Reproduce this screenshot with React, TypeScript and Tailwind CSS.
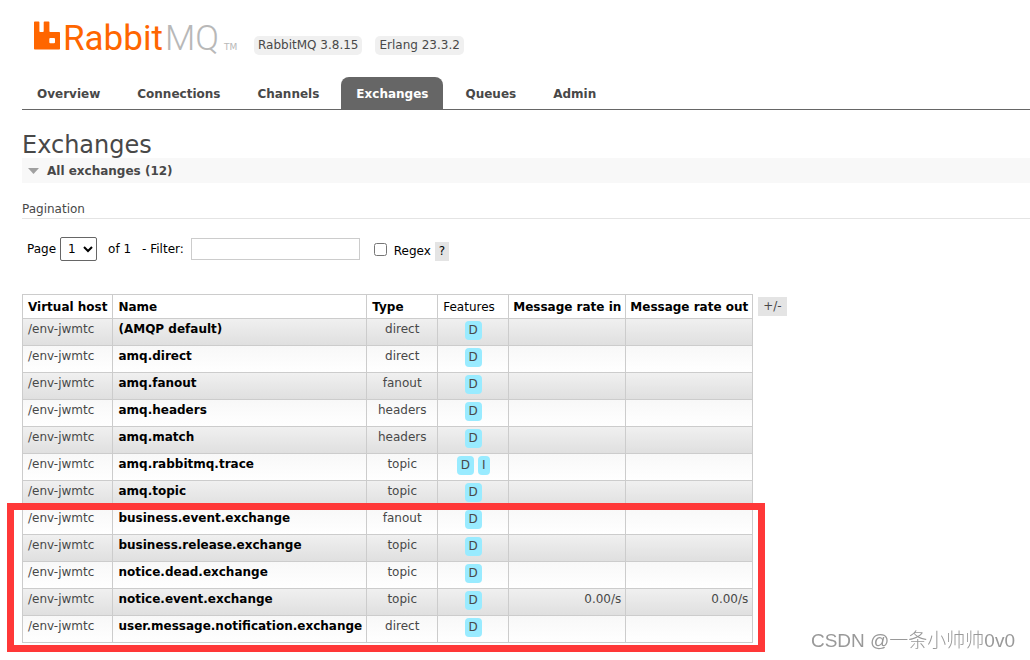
import { useState } from 'react'
import type { ReactNode } from 'react'
import { clsx } from 'clsx'

interface Exchange {
  name: string
  type: string
  features: string[]
  rateIn?: string
  rateOut?: string
}

const VHOST = '/env-jwmtc'

const TABS = ['Overview', 'Connections', 'Channels', 'Exchanges', 'Queues', 'Admin']

const EXCHANGES: Exchange[] = [
  { name: '(AMQP default)', type: 'direct', features: ['D'] },
  { name: 'amq.direct', type: 'direct', features: ['D'] },
  { name: 'amq.fanout', type: 'fanout', features: ['D'] },
  { name: 'amq.headers', type: 'headers', features: ['D'] },
  { name: 'amq.match', type: 'headers', features: ['D'] },
  { name: 'amq.rabbitmq.trace', type: 'topic', features: ['D', 'I'] },
  { name: 'amq.topic', type: 'topic', features: ['D'] },
  { name: 'business.event.exchange', type: 'fanout', features: ['D'] },
  { name: 'business.release.exchange', type: 'topic', features: ['D'] },
  { name: 'notice.dead.exchange', type: 'topic', features: ['D'] },
  { name: 'notice.event.exchange', type: 'topic', features: ['D'], rateIn: '0.00/s', rateOut: '0.00/s' },
  { name: 'user.message.notification.exchange', type: 'direct', features: ['D'] },
]

/** Product logo: the rabbit mark followed by the two-tone word mark. */
const Logo = () => (
  <a href="#" aria-label="RabbitMQ">
    <svg width="208" height="42" viewBox="0 0 208 42">
      <path
        d="M.8 5.500h3.800q.8 0 .8.8v8.900q0 .8.8.8h2.700q.8 0 .8-.8V6.300q0-.8.8-.8h4.100q.8 0 .8.8v8.900q0 .8.8.8h9q.8 0 .8.8v15.900q0 .8-.8.8H.8q-.8 0-.8-.8V6.300q0-.8.8-.8zM16.300 22q-1 0-1 1v3.300q0 1 1 1H20q1 0 1-1V23q0-1-1-1z"
        fill="#ff6600"
        fillRule="evenodd"
      />
      <text y="34" fontSize="35" fontFamily="Roboto, sans-serif">
        <tspan x="29" fill="#ff6600">Rabbit</tspan>
        <tspan x="131" fill="#b8b8b8" fontWeight="300">MQ</tspan>
      </text>
      <text x="190" y="34" fontSize="9" fill="#b8b8b8" fontFamily="'DejaVu Sans', sans-serif">TM</text>
    </svg>
  </a>
)

const VersionTag = ({ children }: { children: ReactNode }) => (
  <span className="rounded-[5px] bg-[#f0f0f0] px-1 leading-[19px]">{children}</span>
)

const FeatureTag = ({ children }: { children: ReactNode }) => (
  <abbr className="inline-block rounded-[4px] bg-[#99ebff] px-1 leading-[19px] no-underline">{children}</abbr>
)

const TH = 'h-6 border border-[#ccc] text-left leading-4 text-black'
const TD = 'h-[27px] border border-[#ccc] pt-[2px] align-top leading-4'

export default function App() {
  const [filter, setFilter] = useState('')
  const [regex, setRegex] = useState(false)

  return (
    <div className="overflow-hidden bg-white pb-[17px] pl-[22px] font-['DejaVu_Sans',Verdana,sans-serif] text-[12px] text-[#484848]">
      <header>
        <div className="flex items-end gap-3 pt-4 pl-3">
          <Logo />
          <div className="mb-[3px] flex gap-[13px]">
            <VersionTag>RabbitMQ 3.8.15</VersionTag>
            <VersionTag>Erlang 23.3.2</VersionTag>
          </div>
        </div>
        <nav className="mt-[19px] flex gap-[7px] border-b border-[#666]">
          {TABS.map(tab => (
            <a
              key={tab}
              href="#"
              className={clsx(
                'rounded-t-lg px-[15px] pt-[2px] leading-[30px] font-bold',
                tab === 'Exchanges' && 'bg-[#666] text-white',
              )}
            >
              {tab}
            </a>
          ))}
        </nav>
      </header>

      <main>
        <h1 className="mt-[22px] text-[24px] leading-[26px]">Exchanges</h1>
        <h2 className="bg-[#f8f8f8] pt-px leading-6 font-bold">
          <button type="button" className="flex items-center gap-2 pl-[6px]">
            <svg width="11" height="6" viewBox="0 0 11 6">
              <path d="M0 0h11L5.500 6z" fill="#a0a0a0" />
            </svg>
            All exchanges (12)
          </button>
        </h2>

        <h3 className="mt-[17px] border-b border-[#e4e4e4] leading-[18px]">Pagination</h3>

        <div className="mt-[18px] flex h-6 items-center pl-[5px] text-black">
          <label htmlFor="page">Page</label>
          <select id="page" className="ml-1 h-6 w-[37px] rounded-[2px] border border-[#666] bg-white pl-[3px]">
            <option>1</option>
          </select>
          <span className="ml-[11px]">of 1</span>
          <label htmlFor="filter" className="ml-[11px]">- Filter:</label>
          <input
            id="filter"
            type="text"
            value={filter}
            onChange={e => setFilter(e.target.value)}
            className="ml-[7px] h-[22px] w-[169px] border border-[#ccc] px-1"
          />
          <input
            id="regex"
            type="checkbox"
            checked={regex}
            onChange={e => setRegex(e.target.checked)}
            className="ml-[14px] size-[13px]"
          />
          <label htmlFor="regex" className="ml-[7px] pt-1">Regex</label>
          <button type="button" className="mt-1 ml-1 bg-[#e4e4e4] px-1 leading-[19px]">?</button>
        </div>

        <div className="mt-[33px] flex items-start gap-[5px]">
          <div className="relative">
            <table className="border-collapse">
              <thead>
                <tr>
                  <th className={clsx(TH, 'px-[5px]')}>Virtual host</th>
                  <th className={clsx(TH, 'pr-1 pl-[5px]')}>Name</th>
                  <th className={clsx(TH, 'w-[71px] px-[5px]')}>Type</th>
                  <th className={clsx(TH, 'w-[71px] px-[5px] font-normal')}>Features</th>
                  <th className={clsx(TH, 'px-1')}>Message rate in</th>
                  <th className={clsx(TH, 'px-1')}>Message rate out</th>
                </tr>
              </thead>
              <tbody>
                {EXCHANGES.map(x => (
                  <tr
                    key={x.name}
                    className="bg-linear-to-b from-[#f8f8f8] to-white odd:from-[#f0f0f0] odd:to-[#dfdfdf]"
                  >
                    <td className={clsx(TD, 'px-[5px]')}>{VHOST}</td>
                    <td className={clsx(TD, 'pr-1 pl-[5px]')}>
                      <a href="#" className="font-bold text-black">{x.name}</a>
                    </td>
                    <td className={clsx(TD, 'px-[5px] text-center')}>{x.type}</td>
                    <td className={clsx(TD, 'px-[5px]')}>
                      <div className="flex justify-center gap-1">
                        {x.features.map(f => (
                          <FeatureTag key={f}>{f}</FeatureTag>
                        ))}
                      </div>
                    </td>
                    <td className={clsx(TD, 'px-1 text-right')}>{x.rateIn}</td>
                    <td className={clsx(TD, 'px-1 text-right')}>{x.rateOut}</td>
                  </tr>
                ))}
              </tbody>
            </table>
            {/* marker box around the application exchanges */}
            <div className="pointer-events-none absolute -right-3 -bottom-[9px] -left-[15px] h-[149px] border-[7px] border-[#ff3838]" />
          </div>
          <button type="button" className="mt-[3px] bg-[#e4e4e4] px-[5px] leading-[19px]">+/-</button>
        </div>
      </main>

      <div className="fixed right-[15px] bottom-[4px] font-['Liberation_Sans','Noto_Sans_CJK_SC',sans-serif] text-[19px] leading-[30px] font-light text-[#999]">
        CSDN @一条小帅帅0v0
      </div>
    </div>
  )
}
